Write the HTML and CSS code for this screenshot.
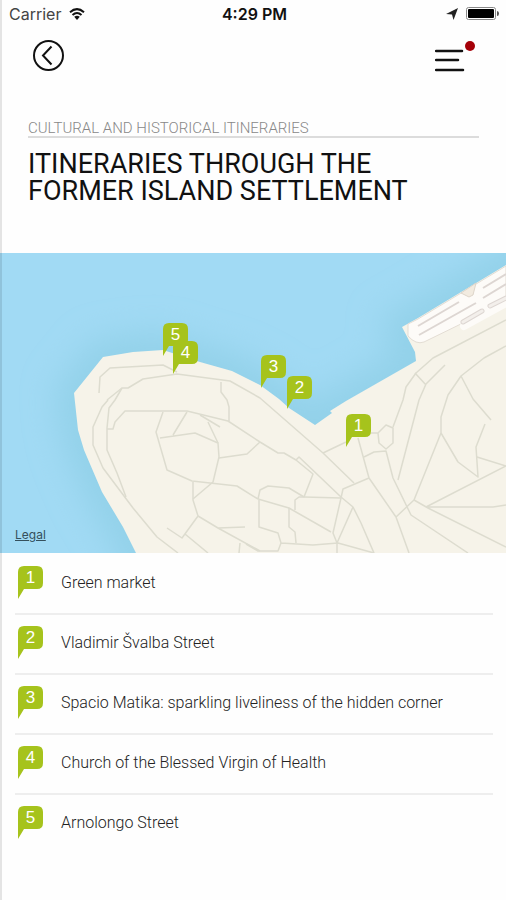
FILE: index.html
```
<!DOCTYPE html>
<html lang="en">

<head>
    <meta charset="utf-8">
    <title>Itineraries through the former island settlement</title>
    <meta name="viewport" content="width=device-width, initial-scale=1">
    <link rel="stylesheet" href="styles.css">
</head>

<body>
    <svg class="defs" aria-hidden="true">
        <symbol id="pin" viewBox="0 0 25 33">
            <path d="M6 0H19Q25 0 25 6V17Q25 23 19 23H6L0 33V6Q0 0 6 0Z" fill="#a6c31c" />
        </symbol>
    </svg>

    <div class="status">
        <div class="carrier">
            <span>Carrier</span>
            <svg width="16" height="12" viewBox="0 0 16 12">
                <g fill="none" stroke="#111" stroke-width="2">
                    <path d="M1 4.2Q8 -2 15 4.2" />
                    <path d="M3.5 7Q8 3 12.5 7" />
                </g>
                <path d="M5.2 8.8Q8 6.8 10.8 8.8L8 12Z" fill="#111" />
            </svg>
        </div>
        <span class="time">4:29 PM</span>
        <div class="power">
            <svg width="12" height="12" viewBox="0 0 12 12">
                <path d="M12 0L7.5 12L6 6.5L0 6Z" fill="#222" />
            </svg>
            <svg width="34" height="14" viewBox="0 0 34 14">
                <rect x="0.5" y="0.5" width="29" height="12" rx="2" fill="#fff" stroke="#888" />
                <rect x="2" y="2" width="26" height="9" rx="1" fill="#000" />
                <path d="M31 4Q33 4 33 6.5Q33 9 31 9Z" fill="#555" />
            </svg>
        </div>
    </div>

    <nav class="topbar">
        <button type="button" class="btn_icon" aria-label="Back">
            <svg width="32" height="32" viewBox="0 0 32 32" fill="none" stroke="#111" stroke-width="2">
                <circle cx="15.5" cy="15.5" r="14.5" />
                <path d="M18.500 6.500L10 15.500L18.500 24.500" />
            </svg>
        </button>
        <button type="button" class="btn_icon" aria-label="Menu">
            <svg width="40" height="32" viewBox="0 0 40 32">
                <path d="M1 11H27M1 20H23M1 30H28" fill="none" stroke="#111" stroke-width="2.500" stroke-linecap="round" />
                <circle cx="35" cy="6" r="5" fill="#a50008" />
            </svg>
        </button>
    </nav>

    <header class="heading">
        <p class="category">CULTURAL AND HISTORICAL ITINERARIES</p>
        <h1>ITINERARIES THROUGH THE FORMER ISLAND SETTLEMENT</h1>
    </header>

    <div class="map">
        <svg class="map_img" viewBox="0 0 506 300" preserveAspectRatio="xMidYMid slice">
            <defs>
                <filter id="shallow" x="-20%" y="-20%" width="140%" height="140%">
                    <feGaussianBlur stdDeviation="16" />
                </filter>
                <path id="land" d="M136 300L123 274L102 239L84 197L78 177L74 140L103 104L133 99L163 97L200 109L232 118L260 132L279 146L289 155L315 172L332 160L330 158L346 148L416 108L415 99L402 74L418 65L506 12L540 -8V340H156Z" />
            </defs>
            <rect width="506" height="300" fill="#a1daf4" />
            <use href="#land" fill="#93d1e9" stroke="#93d1e9" stroke-width="36" filter="url(#shallow)" />
            <use href="#land" fill="#f6f3e9" />

            <!-- car park -->
            <path d="M408 71L418 66L506 13V49L424 89Q416 92 408 83Z" fill="#fdfbf8" stroke="#e3ddd4" />
            <path d="M464 73L506 50" stroke="#fdfbf8" stroke-width="8" stroke-linecap="round" />
            <path d="M461 40L476 30L473 42L469 44Z" fill="#f2ebe0" stroke="#ddd5ca" />
            <path d="M418 73L459 49M419 82L476 50M483 35L506 21M483 45L506 31" stroke="#ddd6d2" stroke-width="2" />
            <path d="M463 69L482 58M490 53L506 45" stroke="#ddd6d2" stroke-width="5" stroke-linecap="round" />
            <path d="M463 69L482 58M490 53L506 45" stroke="#f3efeb" stroke-width="3" stroke-linecap="round" />

            <!-- streets -->
            <g fill="none" stroke="#dddccf" stroke-width="1.500" stroke-linejoin="round">
                <path d="M99 140L100 124L110 115L163 112L177 119" />
                <path d="M107 147L122 135L128 135L143 126L177 121L230 128L260 145L323 200L354 230" />
                <path d="M122 135L115 147L109 155L107 175V197L117 220L126 244" />
                <path d="M221 129V139L227 147L229 154V168" />
                <path d="M108 147L102 154L93 174V192L103 215L133 255L157 284L178 300" />
                <path d="M107 176H113L115 169L125 158H187L228 168L260 189" />
                <path d="M163 159L156 179L167 217L192 228L237 233L258 246" />
                <path d="M187 159L173 182M160 185L195 180L218 190L219 204L213 229L193 246" />
                <path d="M200 162L220 174M208 169L218 190M219 205L247 201L260 189" />
                <path d="M193 229V247L198 263L182 285L167 275M185 281L208 300" />
                <path d="M198 263L218 275L260 298M218 275L245 274M240 290L239 300" />
                <path d="M260 189L278 200H284L296 207L313 221L304 244H299L295 247V257" />
                <path d="M296 207L299 204L341 244L353 254L361 270L374 300" />
                <path d="M304 244L341 245L343 236L369 225M341 245L333 280L337 290V300M353 254L337 290" />
                <path d="M258 246L289 255L331 279M258 246L260 237L268 233L289 235L304 244" />
                <path d="M259 247V274L278 280L281 290L278 298H258L246 291M281 290L313 292L338 290L374 300" />
                <path d="M289 255V274L295 279L296 290" />
                <path d="M323 200L346 189M358 185L369 225L396 264L409 300" />
                <path d="M364 204L374 199L386 198L393 225L411 262L468 300" />
                <path d="M371 180H378L386 172L393 175V190L386 196L379 190L378 180" />
                <path d="M393 174L403 147L406 134L416 120L433 105L506 67" />
                <path d="M398 227L419 147L426 131L445 112M415 120L426 132" />
                <path d="M506 93L484 105L461 123L448 142L441 164V180L414 247L396 264" />
                <path d="M461 123L473 146L491 167M441 180L458 209L478 224L476 194L485 171" />
                <path d="M477 204L506 213L426 254M414 247L428 255L506 294M428 254H493L506 252" />
            </g>
        </svg>
        <div class="pin map_pin pin_5"><svg><use href="#pin" /></svg><span>5</span></div>
        <div class="pin map_pin pin_4"><svg><use href="#pin" /></svg><span>4</span></div>
        <div class="pin map_pin pin_3"><svg><use href="#pin" /></svg><span>3</span></div>
        <div class="pin map_pin pin_2"><svg><use href="#pin" /></svg><span>2</span></div>
        <div class="pin map_pin pin_1"><svg><use href="#pin" /></svg><span>1</span></div>
        <a class="legal" href="#">Legal</a>
    </div>

    <ul class="places">
        <li><a href="#"><span class="pin"><svg><use href="#pin" /></svg><span>1</span></span>Green market</a></li>
        <li><a href="#"><span class="pin"><svg><use href="#pin" /></svg><span>2</span></span>Vladimir Švalba Street</a></li>
        <li><a href="#"><span class="pin"><svg><use href="#pin" /></svg><span>3</span></span>Spacio Matika: sparkling liveliness of the hidden corner</a></li>
        <li><a href="#"><span class="pin"><svg><use href="#pin" /></svg><span>4</span></span>Church of the Blessed Virgin of Health</a></li>
        <li><a href="#"><span class="pin"><svg><use href="#pin" /></svg><span>5</span></span>Arnolongo Street</a></li>
    </ul>
</body>

</html>
```

FILE: styles.css
```
* {
    margin: 0;
    padding: 0;
    box-sizing: border-box;
}

body {
    position: relative;
    min-height: 100vh;
    background-color: #fefefe;
    font-family: Roboto, "Liberation Sans", sans-serif;
    color: #111;
}

/* thin shade along the left side of the screen */
body::before {
    content: "";
    position: absolute;
    z-index: 1;
    top: 0;
    bottom: 0;
    left: 0;
    width: 2px;
    background-color: rgba(0, 0, 0, 0.1);
}

svg {
    display: block;
}

.defs {
    display: none;
}

.status {
    display: grid;
    grid-template-columns: 1fr auto 1fr;
    align-items: center;
    height: 28px;
    padding: 0 6px 0 9px;
    font-family: Inter, "Liberation Sans", sans-serif;
    font-size: 16px;
}

.carrier,
.power {
    display: flex;
    align-items: center;
    gap: 8px;
}

.carrier {
    color: #444;
}

.power {
    justify-content: flex-end;
}

.time {
    font-weight: 600;
}

.topbar {
    display: flex;
    justify-content: space-between;
    padding: 12px 31px 0 33px;
}

.btn_icon {
    border: none;
    background: none;
    cursor: pointer;
}

.heading {
    padding: 48px 27px 48px 28px;
}

.category {
    border-bottom: 2px solid #dcdcdc;
    font-size: 15px;
    font-weight: 300;
    line-height: 16px;
    color: #888;
}

h1 {
    max-width: 400px;
    margin-top: 13px;
    font-size: 27px;
    font-weight: 400;
    line-height: 27px;
}

.map {
    position: relative;
    height: 300px;
    overflow: hidden;
}

.map_img {
    width: 100%;
    height: 100%;
}

.pin {
    position: relative;
    flex: none;
    width: 25px;
    height: 33px;
    font-family: "Liberation Sans", sans-serif;
    font-size: 17px;
    font-weight: 400;
    line-height: 24px;
    text-align: center;
    color: #fff;
}

.pin svg {
    position: absolute;
    width: 100%;
    height: 100%;
}

.pin span {
    position: relative;
    display: block;
}

/* pins are placed from the middle of the map */
.map_pin {
    position: absolute;
}

.pin_1 {
    top: 161px;
    left: calc(50% + 93px);
}

.pin_2 {
    top: 123px;
    left: calc(50% + 34px);
}

.pin_3 {
    top: 102px;
    left: calc(50% + 8px);
}

.pin_4 {
    top: 88px;
    left: calc(50% - 80px);
}

.pin_5 {
    top: 70px;
    left: calc(50% - 90px);
}

.legal {
    position: absolute;
    bottom: 10px;
    left: 15px;
    font-family: Inter, "Liberation Sans", sans-serif;
    font-size: 12px;
    line-height: 16px;
    color: #35505c;
}

.places {
    padding: 2px 13px 0 15px;
    list-style-type: none;
}

.places a {
    display: flex;
    align-items: center;
    gap: 18px;
    min-height: 60px;
    padding: 0 0 4px 3px;
    border-bottom: 2px solid #eee;
    font-size: 16px;
    font-weight: 300;
    color: #222;
    text-decoration: none;
}

.places li:last-child a {
    border-bottom-color: transparent;
}
```
